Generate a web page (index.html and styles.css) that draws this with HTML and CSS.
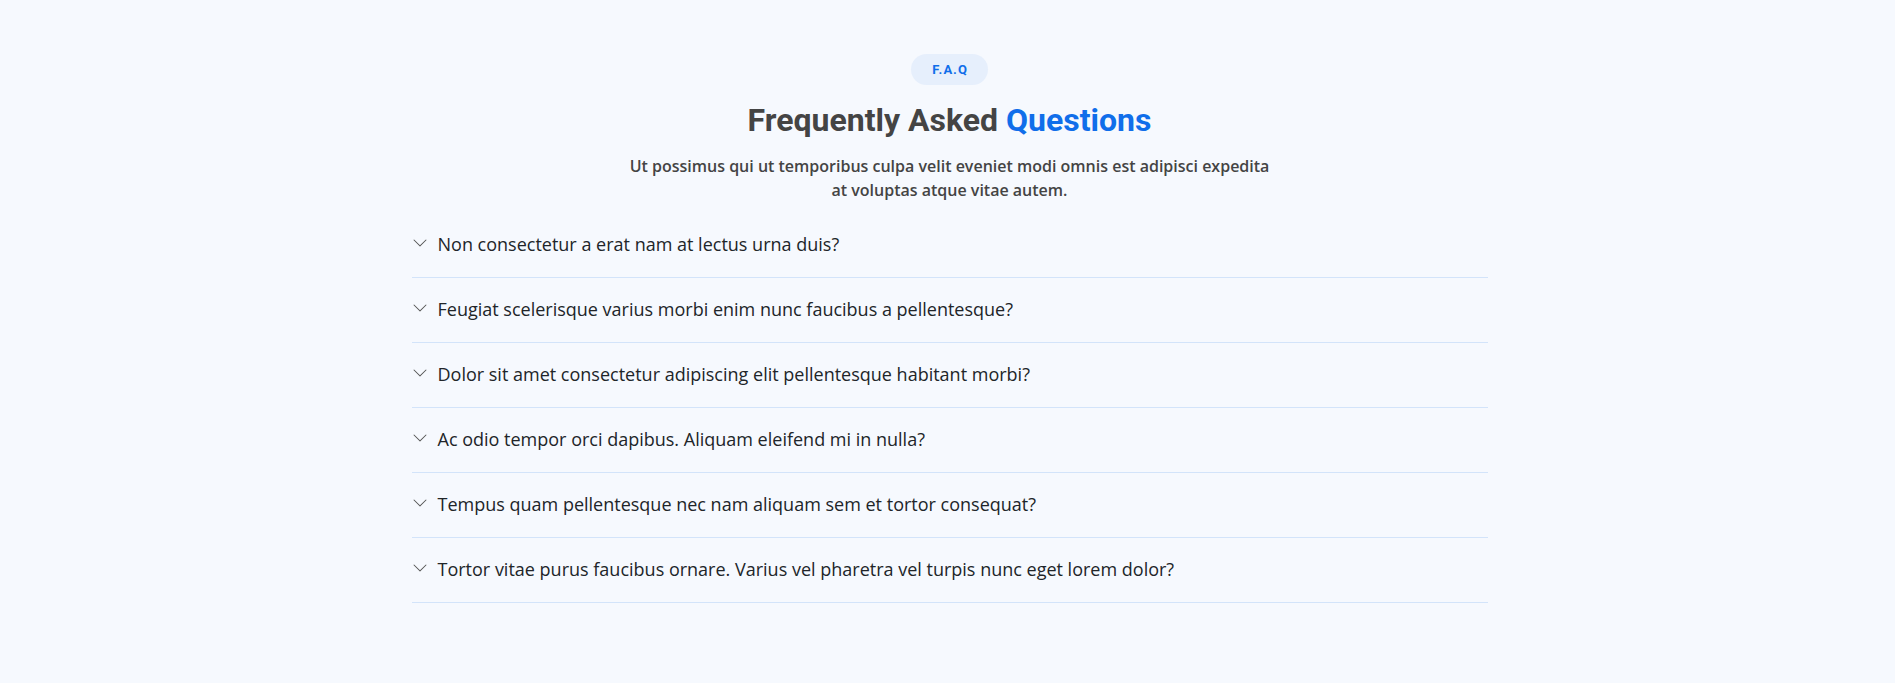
FILE: index.html
```html
<!DOCTYPE html>
<html lang="en">
<head>
<meta charset="utf-8">
<title>F.A.Q</title>
<link rel="stylesheet" href="styles.css">
</head>
<body>
<section class="faq">
  <div class="faq-head">
    <span class="badge">F.A.Q</span>
    <h2 class="title">Frequently Asked <span class="accent">Questions</span></h2>
    <p class="lead">Ut possimus qui ut temporibus culpa velit eveniet modi omnis est adipisci expedita at voluptas atque vitae autem.</p>
  </div>
  <ul class="faq-list">
    <li class="faq-item"><svg class="chev" viewBox="0 0 16 16" width="16" height="16"><path d="M1.646 4.646a.5.5 0 0 1 .708 0L8 10.293l5.646-5.647a.5.5 0 0 1 .708.708l-6 6a.5.5 0 0 1-.708 0l-6-6a.5.5 0 0 1 0-.708z"/></svg><span>Non consectetur a erat nam at lectus urna duis?</span></li>
    <li class="faq-item"><svg class="chev" viewBox="0 0 16 16" width="16" height="16"><path d="M1.646 4.646a.5.5 0 0 1 .708 0L8 10.293l5.646-5.647a.5.5 0 0 1 .708.708l-6 6a.5.5 0 0 1-.708 0l-6-6a.5.5 0 0 1 0-.708z"/></svg><span>Feugiat scelerisque varius morbi enim nunc faucibus a pellentesque?</span></li>
    <li class="faq-item"><svg class="chev" viewBox="0 0 16 16" width="16" height="16"><path d="M1.646 4.646a.5.5 0 0 1 .708 0L8 10.293l5.646-5.647a.5.5 0 0 1 .708.708l-6 6a.5.5 0 0 1-.708 0l-6-6a.5.5 0 0 1 0-.708z"/></svg><span>Dolor sit amet consectetur adipiscing elit pellentesque habitant morbi?</span></li>
    <li class="faq-item"><svg class="chev" viewBox="0 0 16 16" width="16" height="16"><path d="M1.646 4.646a.5.5 0 0 1 .708 0L8 10.293l5.646-5.647a.5.5 0 0 1 .708.708l-6 6a.5.5 0 0 1-.708 0l-6-6a.5.5 0 0 1 0-.708z"/></svg><span>Ac odio tempor orci dapibus. Aliquam eleifend mi in nulla?</span></li>
    <li class="faq-item"><svg class="chev" viewBox="0 0 16 16" width="16" height="16"><path d="M1.646 4.646a.5.5 0 0 1 .708 0L8 10.293l5.646-5.647a.5.5 0 0 1 .708.708l-6 6a.5.5 0 0 1-.708 0l-6-6a.5.5 0 0 1 0-.708z"/></svg><span>Tempus quam pellentesque nec nam aliquam sem et tortor consequat?</span></li>
    <li class="faq-item"><svg class="chev" viewBox="0 0 16 16" width="16" height="16"><path d="M1.646 4.646a.5.5 0 0 1 .708 0L8 10.293l5.646-5.647a.5.5 0 0 1 .708.708l-6 6a.5.5 0 0 1-.708 0l-6-6a.5.5 0 0 1 0-.708z"/></svg><span>Tortor vitae purus faucibus ornare. Varius vel pharetra vel turpis nunc eget lorem dolor?</span></li>
  </ul>
</section>
</body>
</html>
```

FILE: styles.css
```css
* { box-sizing: border-box; }
html, body {
  margin: 0;
  padding: 0;
  background: #f6f9fe;
  height: 100%;
}
body {
  font-family: "Open Sans", "Liberation Sans", sans-serif;
  color: #444444;
}
.faq {
  padding: 54px 0 0 4px;
}
.faq-head {
  display: flex;
  flex-direction: column;
  align-items: center;
  text-align: center;
}
.badge {
  display: inline-block;
  font-family: Roboto, "Liberation Sans", sans-serif;
  font-weight: 700;
  font-size: 13px;
  letter-spacing: 1px;
  line-height: 15px;
  color: #106eea;
  background: #e6effc;
  border-radius: 50px;
  padding: 8px 20px 8px 21px;
}
.title {
  margin: 15px 0 0;
  font-family: Roboto, "Liberation Sans", sans-serif;
  font-weight: 700;
  font-size: 32px;
  line-height: 40px;
  color: #444444;
}
.accent { color: #106eea; }
.lead {
  margin: 14px 0 0;
  max-width: 645px;
  font-size: 16px;
  font-weight: 600;
  line-height: 24px;
  color: #444444;
}
.faq-list {
  list-style: none;
  margin: 11px auto 0;
  padding: 0;
  width: 1076px;
}
.faq-item {
  display: flex;
  align-items: flex-start;
  gap: 10px;
  padding: 18px 0 19px;
  border-bottom: 1px solid #d3e4fa;
  font-size: 18px;
  line-height: 27px;
  color: #212529;
}
.chev {
  flex: none;
  margin-top: 4px;
  fill: #555555;
}
```
